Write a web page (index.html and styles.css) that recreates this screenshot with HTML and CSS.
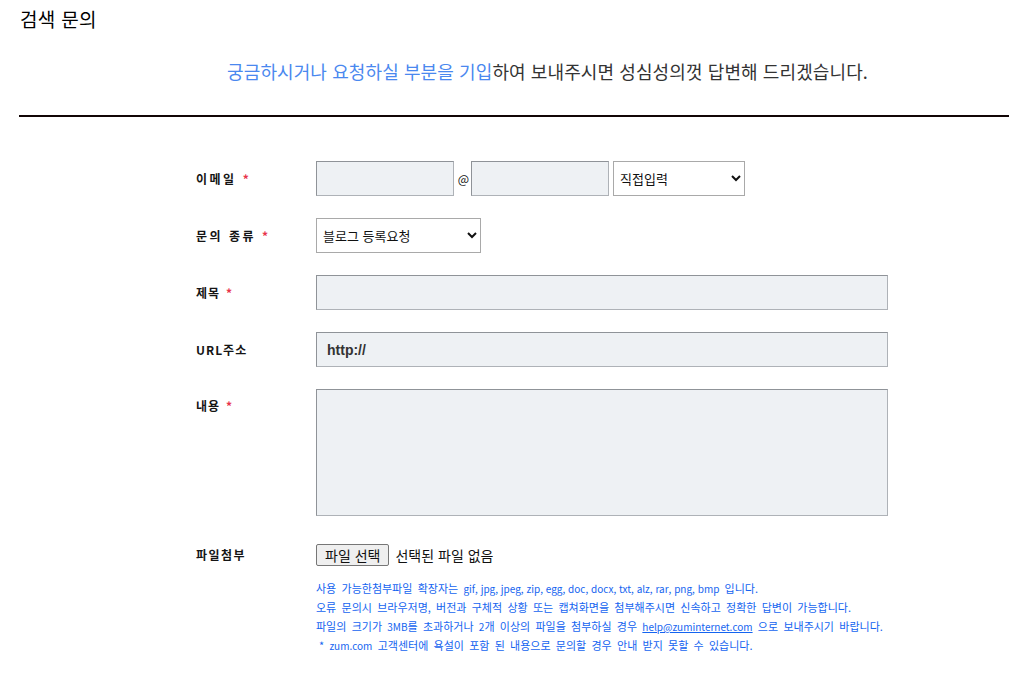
FILE: index.html
```html
<!DOCTYPE html>
<html lang="ko">
<head>
<meta charset="utf-8">
<title>검색 문의</title>
<link rel="stylesheet" href="styles.css">
</head>
<body>
<header class="page-head">
  <h1 class="title">검색 문의</h1>
  <p class="intro"><span class="hl">궁금하시거나 요청하실 부분을 기입</span>하여 보내주시면 성심성의껏 답변해 드리겠습니다.</p>
</header>
<hr class="divider">
<form class="inquiry">
  <div class="row">
    <label class="label label-wide">이메일<span class="req">*</span></label>
    <div class="ctrl">
      <input class="field f-email" type="text">
      <span class="at">@</span>
      <input class="field f-email" type="text">
      <select class="sel sel-domain"><option>직접입력</option></select>
    </div>
  </div>
  <div class="row">
    <label class="label label-wide">문의 종류<span class="req">*</span></label>
    <div class="ctrl">
      <select class="sel sel-type"><option>블로그 등록요청</option></select>
    </div>
  </div>
  <div class="row">
    <label class="label">제목<span class="req">*</span></label>
    <div class="ctrl"><input class="field f-full" type="text"></div>
  </div>
  <div class="row">
    <label class="label">URL주소</label>
    <div class="ctrl"><input class="field f-full f-url" type="text" value="http://"></div>
  </div>
  <div class="row row-top">
    <label class="label label-top">내용<span class="req">*</span></label>
    <div class="ctrl"><textarea class="field f-area"></textarea></div>
  </div>
  <div class="row row-file">
    <label class="label label-file">파일첨부</label>
    <div class="ctrl">
      <span class="file-btn">파일 선택</span>
      <span class="file-name">선택된 파일 없음</span>
    </div>
  </div>
  <div class="notes">
    <p>사용 가능한첨부파일 확장자는 <span class="en">gif, jpg, jpeg, zip, egg, doc, docx, txt, alz, rar, png, bmp</span> 입니다.</p>
    <p>오류 문의시 브라우저명, 버전과 구체적 상황 또는 캡쳐화면을 첨부해주시면 신속하고 정확한 답변이 가능합니다.</p>
    <p>파일의 크기가 <span class="en">3MB</span>를 초과하거나 <span class="en">2</span>개 이상의 파일을 첨부하실 경우 <u class="en">help@zuminternet.com</u> 으로 보내주시기 바랍니다.</p>
    <p class="note-last">* <span class="en">zum.com</span> 고객센터에 욕설이 포함 된 내용으로 문의할 경우 안내 받지 못할 수 있습니다.</p>
  </div>
</form>
</body>
</html>
```

FILE: styles.css
```css
html, body {
  margin: 0;
  padding: 0;
  background: #ffffff;
}

body {
  font-family: "Noto Sans CJK KR", "Noto Sans", sans-serif;
  color: #111111;
}

.title {
  margin: 0;
  padding: 7px 0 0 20px;
  font-size: 19px;
  font-weight: 400;
  line-height: 24px;
  letter-spacing: 0.3px;
  color: #000000;
}

.intro {
  margin: 0;
  padding: 28px 0 0 86px;
  font-size: 18px;
  line-height: 24px;
  text-align: center;
  color: #333333;
  letter-spacing: 0.1px;
}

.intro .hl {
  color: #4a88ef;
}

.divider {
  margin: 32px 0 0 19px;
  border: 0;
  height: 2px;
  background: #110505;
}

.inquiry {
  margin: 44px 0 0 0;
  padding-left: 196px;
}

.row {
  display: flex;
  align-items: center;
  margin-bottom: 22px;
}

.row-top {
  align-items: flex-start;
  margin-top: 2px;
  margin-bottom: 28px;
}

.row-file {
  margin-bottom: 13px;
}

.label {
  width: 120px;
  flex: none;
  font-size: 12px;
  font-weight: 700;
  line-height: 14px;
  letter-spacing: 1px;
  color: #151515;
}

.label-wide {
  letter-spacing: 2.5px;
}

.label-top {
  padding-top: 10px;
}

.label-file {
  letter-spacing: 1.5px;
}

.req {
  color: #e8344c;
  margin-left: 6px;
  font-size: 12px;
}

.ctrl {
  display: flex;
  align-items: center;
}

.field {
  box-sizing: border-box;
  height: 35px;
  margin: 0;
  border: 1px solid;
  border-color: #8f9398 #aeb2b7 #aeb2b7 #8f9398;
  background: #eef1f4;
  font-family: "Noto Sans CJK KR", sans-serif;
  outline: none;
}

.f-email {
  width: 138px;
}

.at {
  width: 17px;
  padding-left: 2px;
  box-sizing: border-box;
  font-size: 12px;
  text-align: center;
  color: #111111;
}

.sel {
  box-sizing: border-box;
  height: 35px;
  margin: 0;
  border: 1px solid #a9a9a9;
  border-radius: 0;
  background: #ffffff;
  font-family: "Noto Sans CJK KR", sans-serif;
  font-size: 13px;
  color: #111111;
  padding: 0 2px;
}

.sel-domain {
  width: 132px;
  margin-left: 4px;
}

.sel-type {
  width: 165px;
}

.f-full {
  width: 572px;
}

.f-url {
  padding-left: 10px;
  font-family: "Liberation Sans", Arial, sans-serif;
  font-size: 14px;
  font-weight: 700;
  color: #333333;
}

.f-area {
  width: 572px;
  height: 127px;
  resize: none;
  display: block;
}

.file-btn {
  box-sizing: border-box;
  height: 22px;
  padding: 0 8px;
  border: 1px solid #767676;
  border-radius: 2px;
  background: #efefef;
  font-size: 14px;
  line-height: 20px;
  color: #111111;
}

.file-name {
  margin-left: 6px;
  font-size: 14px;
  line-height: 20px;
  color: #111111;
}

.notes {
  padding-left: 120px;
  font-size: 11px;
  line-height: 19px;
  word-spacing: 2.2px;
  color: #1464f0;
}

.notes p {
  margin: 0;
}

.notes .en {
  font-size: 10px;
  word-spacing: 0;
}

.note-last {
  padding-left: 3px;
}
```
